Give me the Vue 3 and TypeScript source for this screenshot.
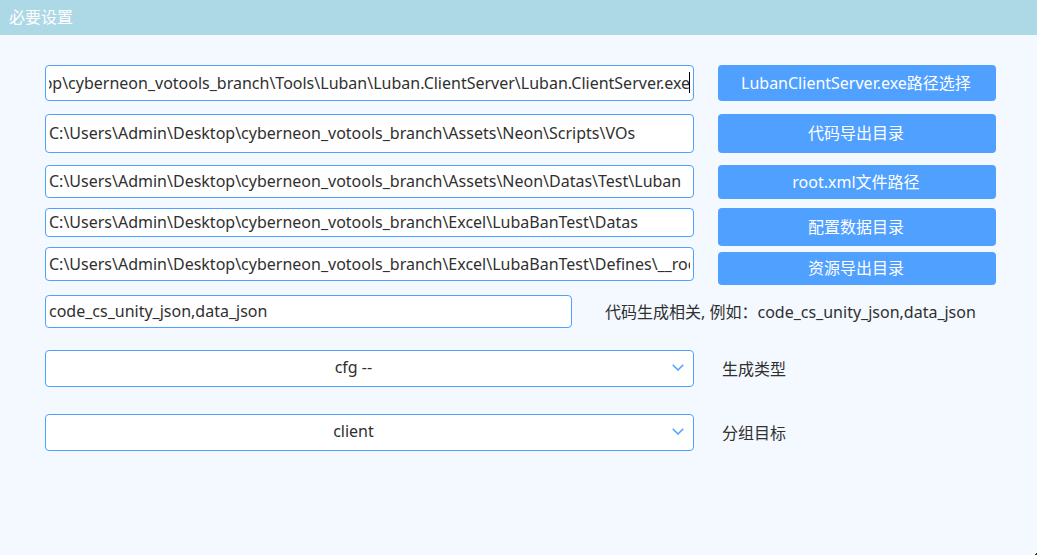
<script setup lang="ts">
import { nextTick, onMounted, ref } from 'vue'

interface PathField {
  id: string
  value: string
  action: string
}

const fields = ref<PathField[]>([
  {
    id: 'client',
    value: 'C:\\Users\\Admin\\Desktop\\cyberneon_votools_branch\\Tools\\Luban\\Luban.ClientServer\\Luban.ClientServer.exe',
    action: 'LubanClientServer.exe路径选择',
  },
  {
    id: 'code',
    value: 'C:\\Users\\Admin\\Desktop\\cyberneon_votools_branch\\Assets\\Neon\\Scripts\\VOs',
    action: '代码导出目录',
  },
  {
    id: 'root',
    value: 'C:\\Users\\Admin\\Desktop\\cyberneon_votools_branch\\Assets\\Neon\\Datas\\Test\\Luban',
    action: 'root.xml文件路径',
  },
  {
    id: 'config',
    value: 'C:\\Users\\Admin\\Desktop\\cyberneon_votools_branch\\Excel\\LubaBanTest\\Datas',
    action: '配置数据目录',
  },
  {
    id: 'output',
    value: 'C:\\Users\\Admin\\Desktop\\cyberneon_votools_branch\\Excel\\LubaBanTest\\Defines\\__root__.xml',
    action: '资源导出目录',
  },
])

const generators = ref('code_cs_unity_json,data_json')
const genType = ref('cfg --')
const group = ref('client')
const pathColumn = ref<HTMLElement | null>(null)

onMounted(async () => {
  await nextTick()
  const first = pathColumn.value?.querySelector('input')
  if (first) {
    first.focus()
    first.setSelectionRange(first.value.length, first.value.length)
    first.scrollLeft = first.scrollWidth
  }
})
</script>

<template>
  <main class="window">
    <header class="titlebar"><h1>必要设置</h1></header>

    <form class="body" @submit.prevent>
      <div class="columns">
        <div ref="pathColumn" class="paths">
          <div v-for="f in fields" :key="f.id" class="field" :class="`field-${f.id}`">
            <input
              v-model="f.value"
              class="box"
              type="text"
              spellcheck="false"
              :aria-labelledby="`action-${f.id}`"
            />
            <span v-if="f.id === 'client'" class="caret" aria-hidden="true"></span>
          </div>
        </div>
        <div class="actions">
          <button
            v-for="f in fields"
            :id="`action-${f.id}`"
            :key="f.id"
            type="button"
            class="action"
            :class="`action-${f.id}`"
          >{{ f.action }}</button>
        </div>
      </div>

      <div class="generator">
        <input id="generators" v-model="generators" class="box" type="text" spellcheck="false" />
        <label for="generators">代码生成相关, 例如：code_cs_unity_json,data_json</label>
      </div>

      <div class="choice">
        <div class="select">
          <select id="gen-type" v-model="genType" class="box">
            <option>cfg --</option>
          </select>
          <svg class="chevron" viewBox="0 0 12 7" aria-hidden="true"><path d="M0.7 0.7 L6 6 L11.3 0.7" /></svg>
        </div>
        <label for="gen-type">生成类型</label>
      </div>

      <div class="choice">
        <div class="select">
          <select id="group" v-model="group" class="box">
            <option>client</option>
            <option>server</option>
          </select>
          <svg class="chevron" viewBox="0 0 12 7" aria-hidden="true"><path d="M0.7 0.7 L6 6 L11.3 0.7" /></svg>
        </div>
        <label for="group">分组目标</label>
      </div>
    </form>

    <svg class="grip" viewBox="0 0 2 2" aria-hidden="true"><path d="M1 0h1v2H0V1h1z" /></svg>
  </main>
</template>

<style>
body {
  margin: 0;
  background: #f3f9ff;
}
</style>

<style scoped>
.window {
  position: relative;
  box-sizing: border-box;
  min-height: 100vh;
  background: #f3f9ff;
  color: #303030;
  font: 16px/22px "Noto Sans", "Noto Sans CJK SC", sans-serif;
}
.titlebar {
  display: flex;
  align-items: center;
  box-sizing: border-box;
  height: 35px;
  padding: 0 9px 1px;
  background: #add8e6;
  color: #fff;
}
.titlebar h1 {
  margin: 0;
  font-size: 16px;
  font-weight: 400;
}
.body {
  padding: 30px 41px 0 45px;
}
.columns {
  display: grid;
  grid-template-columns: minmax(0, 7fr) minmax(0, 3fr);
  column-gap: 24px;
}
.paths,
.actions {
  display: flex;
  flex-direction: column;
}
.box {
  display: block;
  box-sizing: border-box;
  width: 100%;
  height: 100%;
  margin: 0;
  padding: 0 3px 1px;
  border: 1px solid #50a0ff;
  border-radius: 4px;
  outline: none;
  background: #fff;
  color: inherit;
  font: inherit;
}
.field {
  position: relative;
}
.field-client .box {
  caret-color: transparent;
}
.caret {
  position: absolute;
  top: 7px;
  right: 4px;
  width: 1px;
  height: 21px;
  background: #000;
}
.field-client { height: 36px; margin-bottom: 13px; }
.field-code { height: 39px; margin-bottom: 12px; }
.field-root { height: 33px; margin-bottom: 10px; }
.field-config { height: 29px; margin-bottom: 10px; }
.field-output { height: 34px; }

.action {
  box-sizing: border-box;
  margin: 0;
  padding: 0 10px 1px 8px;
  border: 0;
  border-radius: 4px;
  background: #50a0ff;
  color: #fff;
  font: inherit;
  white-space: nowrap;
  cursor: pointer;
}
.action-client { height: 36px; margin-bottom: 13px; }
.action-code { height: 39px; margin-bottom: 12px; }
.action-root { height: 34px; margin-bottom: 9px; }
.action-config { height: 38px; margin-bottom: 6px; }
.action-output { height: 33px; }

.generator {
  display: flex;
  align-items: center;
  gap: 33px;
  height: 33px;
  margin: 14px 0 22px;
  margin-top: 10px;
}
.generator .box {
  flex: 1;
  min-width: 0;
}
.generator label {
  flex: 0 0 391px;
  white-space: nowrap;
}
.choice {
  display: grid;
  grid-template-columns: minmax(0, 7fr) minmax(0, 3fr);
  column-gap: 24px;
  align-items: center;
  height: 37px;
  margin-bottom: 27px;
}
.choice label {
  padding-left: 4px;
}
.select {
  position: relative;
  height: 100%;
}
.select .box {
  appearance: none;
  padding: 0 34px 4px 2px;
  text-align: center;
  text-align-last: center;
}
.chevron {
  position: absolute;
  top: 14px;
  right: 10px;
  width: 12px;
  height: 7px;
  fill: none;
  stroke: #50a0ff;
  stroke-width: 1.5;
  pointer-events: none;
}
.grip {
  position: absolute;
  right: 0;
  bottom: 0;
  width: 2px;
  height: 2px;
  fill: #303030;
}
</style>
